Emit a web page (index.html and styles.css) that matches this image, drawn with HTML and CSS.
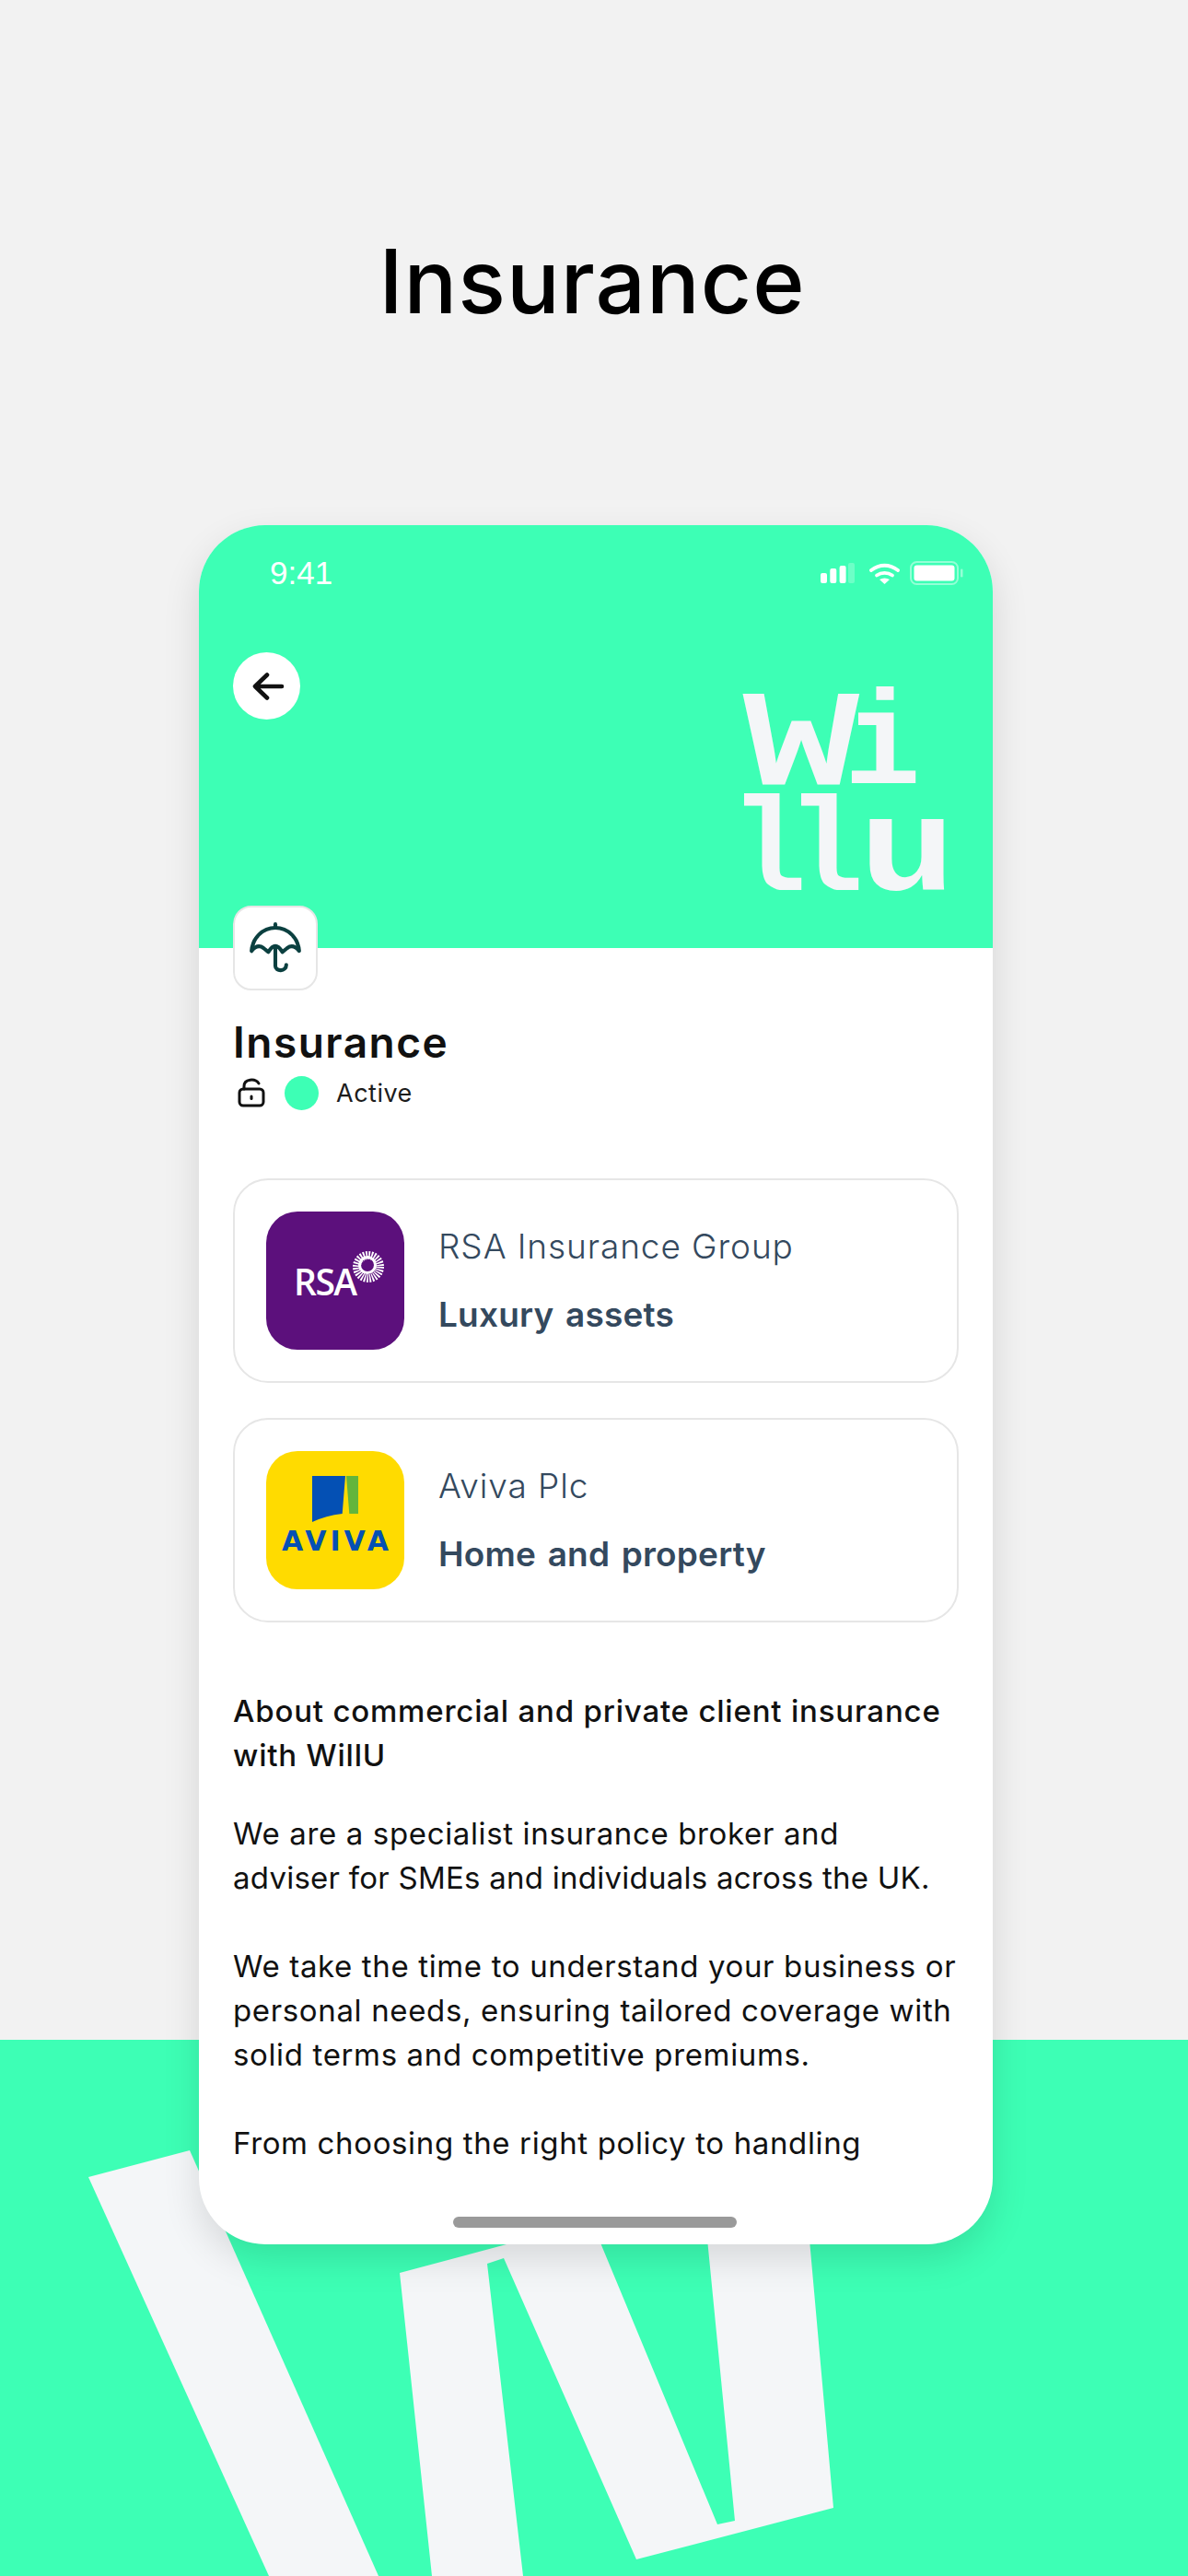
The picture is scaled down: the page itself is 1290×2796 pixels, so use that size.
FILE: index.html
```html
<!DOCTYPE html>
<html lang="en">
<head>
<meta charset="utf-8">
<title>Insurance</title>
<link rel="stylesheet" href="styles.css">
</head>
<body>
<div class="page">
  <svg class="decor" viewBox="0 0 1290 2796" width="1290" height="2796" aria-hidden="true">
    <polygon points="96,2363 206,2334 411,2796 292,2796"/>
    <polygon points="434,2467 550,2436 560,2420 646,2420 779,2740 798,2736 767,2420 878,2420 905,2722 691,2778 547,2451 529,2457 568,2796 469,2796"/>
  </svg>
  <h1 class="page-title">Insurance</h1>
  <main class="phone">
    <header class="hero">
      <div class="status">
        <span class="time">9:41</span>
        <span class="status-icons">
          <svg class="signal" width="37" height="22" viewBox="0 0 37 22"><g fill="#fff"><rect x="0" y="11" width="7" height="11" rx="2"/><rect x="10.300" y="6" width="7" height="16" rx="2"/><rect x="20.600" y="3" width="7" height="19" rx="2"/><rect x="30" y="0" width="7" height="22" rx="2" opacity=".25"/></g></svg>
          <svg width="33" height="23" viewBox="0 0 33 23"><g fill="none" stroke="#fff" stroke-width="3.800" stroke-linecap="round"><path d="M2 8C11 1 22 1 31 8"/><path d="M8 13.500C13 10 20 10 25 13.500"/></g><path d="M11 18C14.500 16 18.500 16 22 18L16.500 23Z" fill="#fff"/></svg>
          <svg class="battery" width="58" height="26" viewBox="0 0 58 26"><rect x="1" y="1" width="51" height="24" rx="6.500" fill="none" stroke="#fff" stroke-opacity=".45" stroke-width="2"/><rect x="4.500" y="4.500" width="44" height="17" rx="3" fill="#fff"/><rect x="55" y="8.500" width="2.500" height="9" rx="1.200" fill="#fff" fill-opacity=".45"/></svg>
        </span>
      </div>
      <div class="hero-body">
        <button class="back" aria-label="Back">
          <svg class="back-arrow" width="36" height="30" viewBox="0 0 36 30" fill="none" stroke="#111" stroke-width="4.600" stroke-linecap="round" stroke-linejoin="round"><path d="M33 15H4M17 2.500 4 15 17 27.500"/></svg>
        </button>
        <div class="wordmark">
          <div class="wm-line"><span class="wm-g wm-w">W</span><span class="wm-g wm-i">i</span></div>
          <div class="wm-line"><span class="wm-g wm-l1">l</span><span class="wm-g wm-l2">l</span><span class="wm-g wm-u">u</span></div>
        </div>
      </div>
    </header>
    <section class="content">
      <div class="tile">
        <svg width="56" height="56" viewBox="0 0 52 52" fill="none" stroke="#0b4040" stroke-width="3.800" stroke-linecap="round" stroke-linejoin="round">
          <path d="M26 2V5.500"/>
          <path d="M2 29C3 16 13 5.500 26 5.500S49 16 50 29C46 24 42 23 38 26L33 30C30 25 28 24 26 24S22 25 19 30L14 26C10 23 6 24 2 29Z"/>
          <path d="M26 25V44C26 50 37 50 37 43"/>
        </svg>
      </div>
      <h2 class="name">Insurance</h2>
      <div class="state">
        <svg class="lock" width="30" height="32" viewBox="0 0 30 32" fill="none" stroke="#111" stroke-width="3" stroke-linecap="round" stroke-linejoin="round"><rect x="2" y="12" width="26" height="18" rx="4"/><path d="M7 12V9C7 1 19 0 23 6"/><path d="M15 20V22.500"/></svg>
        <span class="dot"></span>
        <span class="state-label">Active</span>
      </div>

      <article class="card">
        <div class="logo logo-rsa">
          <span class="rsa-text">RSA</span>
          <svg class="rsa-sun" width="36" height="36" viewBox="0 0 36 36"><circle cx="18" cy="18" r="12.500" fill="none" stroke="#fff" stroke-width="9" stroke-dasharray="1.600 1.200"/><circle cx="17" cy="16" r="8.500" fill="none" stroke="#fff" stroke-width="3"/></svg>
        </div>
        <div class="card-text">
          <p class="insurer">RSA Insurance Group</p>
          <p class="cover">Luxury assets</p>
        </div>
      </article>

      <article class="card">
        <div class="logo logo-aviva">
          <svg class="aviva-mark" width="50" height="50" viewBox="0 0 50 50"><path d="M0 0H36L32.700 41Q15 43 0 50Z" fill="#0450b4"/><polygon points="37,0 50,0 50,41 40.300,41" fill="#63b53c"/></svg>
          <span class="aviva-text">AVIVA</span>
        </div>
        <div class="card-text">
          <p class="insurer">Aviva Plc</p>
          <p class="cover">Home and property</p>
        </div>
      </article>

      <h3 class="about-title">About commercial and private client insurance with WillU</h3>
      <p class="about">We are a specialist insurance broker and<br><span class="about-tight">adviser for SMEs and individuals across the UK.</span></p>
      <p class="about">We take the time to understand your business or personal needs, ensuring tailored coverage with solid terms and competitive premiums.</p>
      <p class="about">From choosing the right policy to handling</p>
    </section>
    <div class="home-bar"></div>
  </main>
</div>
</body>
</html>
```
FILE: styles.css
```css
* { box-sizing: border-box; }
html, body { margin: 0; padding: 0; }
body { width: 1290px; height: 2796px; overflow: hidden; font-family: Inter, "Liberation Sans", sans-serif; }
p, h1, h2, h3 { margin: 0; }

.page {
  position: relative;
  width: 1290px;
  height: 2796px;
  padding-top: 240px;
  overflow: hidden;
  background: linear-gradient(#f2f2f2 2214px, #3dffb5 2214px);
}
.decor { position: absolute; left: 0; top: 0; fill: #f4f6f8; }

.page-title {
  position: relative;
  height: 330px;
  text-align: center;
  font-size: 96px;
  line-height: 130px;
  font-weight: 550;
  letter-spacing: 1px;
  margin-left: -4px;
  color: #000;
}

.phone {
  position: relative;
  width: 862px;
  height: 1866px;
  margin-left: 216px;
  border-radius: 72px;
  background: #fff;
  box-shadow: 0 16px 40px rgba(0, 0, 0, .12);
}

.hero {
  height: 459px;
  padding: 38px 37px 0;
  background: #3dffb5;
  border-radius: 72px 72px 0 0;
}
.status { display: flex; justify-content: space-between; align-items: center; height: 28px; padding-left: 40px; }
.time { font-family: "Liberation Sans", sans-serif; font-size: 35px; color: #fff; }
.status-icons { display: flex; align-items: center; gap: 11px; margin-right: -5px; }
.signal { margin-right: 5px; }

.hero-body { display: flex; justify-content: space-between; margin-top: 72px; }
.back {
  width: 73px; height: 73px; padding: 0;
  display: flex; align-items: center; justify-content: center;
  border: 0; border-radius: 50%; background: #fff;
}
.back-arrow { margin-left: 3px; }

.wordmark {
  margin-top: 46px;
  margin-right: 15px;
  width: 217px;
  font-family: "Liberation Mono", monospace;
  font-weight: 700;
  font-size: 145px;
  line-height: 116px;
  color: #f4f6f8;
}
.wm-line { display: flex; height: 116px; }
.wm-g { display: block; flex: none; transform-origin: 0 50%; }
.wm-w { width: 117px; font-weight: 400; -webkit-text-stroke: 3px #f4f6f8; transform: scaleX(1.4); }
.wm-i { width: 67px; margin-left: -9px; transform: scaleX(.95); }
.wm-l1 { width: 62px; margin-left: -16px; transform: scaleX(.95); }
.wm-l2 { width: 78px; transform: scaleX(.95); }
.wm-u { width: 90px; transform: scaleX(1.2); }

.content { position: relative; padding: 0 37px; height: 1360px; }
.tile {
  width: 92px; height: 92px;
  margin-top: -46px;
  display: flex; align-items: center; justify-content: center;
  background: #fff;
  border: 2px solid #e6e6e6;
  border-radius: 20px;
}
.name { margin-top: 30px; font-size: 46px; line-height: 52px; font-weight: 600; letter-spacing: 1.500px; color: #111; }
.state { display: flex; align-items: center; height: 38px; margin-top: 10px; }
.lock { margin-left: 5px; }
.dot { width: 37px; height: 37px; margin-left: 21px; border-radius: 50%; background: #3dffb5; }
.state-label { margin-left: 19px; font-size: 27px; letter-spacing: .5px; color: #1c1c1c; }

.card {
  display: flex;
  align-items: center;
  gap: 37px;
  height: 222px;
  margin-top: 38px;
  padding: 0 34px;
  border: 2px solid #e6e6e6;
  border-radius: 38px;
}
.state + .card { margin-top: 74px; }
.logo { position: relative; flex: none; width: 150px; height: 150px; border-radius: 34px; }
.logo-rsa { background: #5c107c; }
.rsa-text { position: absolute; left: 30px; top: 51px; font-family: "Open Sans", sans-serif; font-weight: 600; font-size: 39px; line-height: 50px; letter-spacing: -1.500px; color: #fff; }
.rsa-sun { position: absolute; left: 93px; top: 42px; }
.logo-aviva { background: #ffdb00; }
.aviva-mark { position: absolute; left: 50px; top: 27px; }
.aviva-text { position: absolute; left: 0; right: 0; top: 80px; padding-left: 4px; text-align: center; font-family: "DejaVu Sans", sans-serif; font-weight: 700; font-size: 30px; line-height: 36px; letter-spacing: 4px; color: #0450b4; }
.card-text { display: flex; flex-direction: column; gap: 22px; }
.insurer { font-size: 37px; line-height: 52px; font-weight: 300; letter-spacing: .9px; color: #34495e; }
.cover { font-size: 37px; line-height: 52px; font-weight: 600; letter-spacing: .2px; word-spacing: 3px; color: #34495e; }

.about-title { margin-top: 72px; font-size: 33px; line-height: 48px; font-weight: 500; letter-spacing: .8px; color: #111; }
.about { margin-top: 48px; font-size: 33px; line-height: 48px; font-weight: 400; letter-spacing: .64px; color: #111; }
.about-tight { letter-spacing: .25px; }
.about-title + .about { margin-top: 37px; }

.home-bar { position: absolute; left: 276px; bottom: 18px; width: 308px; height: 12px; border-radius: 6px; background: #9a9a9a; }
```
